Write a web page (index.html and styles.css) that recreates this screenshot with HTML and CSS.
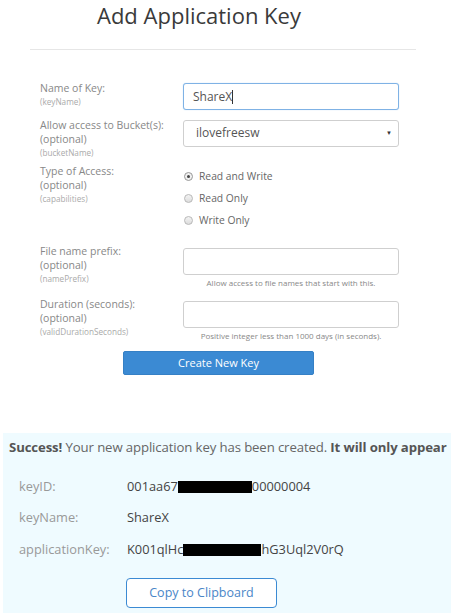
FILE: index.html
```html
<!DOCTYPE html>
<html>
<head>
<meta charset="utf-8">
<link rel="stylesheet" href="styles.css">
</head>
<body>
<div class="page">
  <h1 class="title">Add Application Key</h1>
  <div class="rule"></div>
  <form class="form">
    <div class="row r1">
      <div class="lab"><div class="main">Name of Key:</div><div class="sub">(keyName)</div></div>
      <div class="field"><div class="input focus">ShareX<span class="caret"></span></div></div>
    </div>
    <div class="row r2">
      <div class="lab"><div class="main">Allow access to Bucket(s):</div><div class="main">(optional)</div><div class="sub">(bucketName)</div></div>
      <div class="field"><div class="input select"><span>ilovefreesw</span><span class="arrow">▼</span></div></div>
    </div>
    <div class="row r3">
      <div class="lab"><div class="main">Type of Access:</div><div class="main">(optional)</div><div class="sub">(capabilities)</div></div>
      <div class="field radios">
        <div class="radio"><span class="dot on"></span>Read and Write</div>
        <div class="radio"><span class="dot"></span>Read Only</div>
        <div class="radio"><span class="dot"></span>Write Only</div>
      </div>
    </div>
    <div class="row r4">
      <div class="lab"><div class="main">File name prefix:</div><div class="main">(optional)</div><div class="sub">(namePrefix)</div></div>
      <div class="field"><div class="input"></div><div class="help">Allow access to file names that start with this.</div></div>
    </div>
    <div class="row r5">
      <div class="lab"><div class="main">Duration (seconds):</div><div class="main">(optional)</div><div class="sub">(validDurationSeconds)</div></div>
      <div class="field"><div class="input"></div><div class="help">Positive integer less than 1000 days (in seconds).</div></div>
    </div>
    <div class="btnrow"><div class="btn-primary">Create New Key</div></div>
  </form>
  <div class="success">
    <div class="msg"><b>Success!</b> Your new application key has been created. <b>It will only appear</b></div>
    <div class="kv first"><span class="k">keyID:</span><span class="v">001aa67<span class="redact r-id"></span>00000004</span></div>
    <div class="kv"><span class="k">keyName:</span><span class="v">ShareX</span></div>
    <div class="kv"><span class="k">applicationKey:</span><span class="v">K001qlHc<span class="redact r-key"></span>hG3Uql2V0rQ</span></div>
    <div class="copyrow"><div class="btn-outline">Copy to Clipboard</div></div>
  </div>
</div>
</body>
</html>
```
FILE: styles.css
```css
html, body { margin: 0; padding: 0; background: #fff; overflow: hidden; }
body { font-family: "Open Sans", "Liberation Sans", sans-serif; color: #555; width: 451px; height: 613px; }
.page { width: 451px; overflow: hidden; }
.title { margin: 0; padding: 0 0 0 97px; font-size: 22px; font-weight: 400; color: #3a3a3a; line-height: 30px; height: 31px; }
.rule { margin: 18px 35px 0 30px; height: 1px; background: #e6e6e6; }
.form { padding: 31px 0 0 40px; margin: 0; }
.row { display: grid; grid-template-columns: 143px 216px; align-items: start; }
.lab .main { font-size: 10.5px; line-height: 14px; color: #888; }
.lab .sub { font-size: 8.2px; line-height: 13px; color: #aaa; }
.input { box-sizing: border-box; height: 27px; border: 1px solid #cfcfcf; border-radius: 3px; font-size: 12px; line-height: 25px; padding: 0 9px; color: #555; background: #fff; }
.focus { border-color: #7fb2e5; box-shadow: 0 0 1px rgba(102,175,233,.6); }
.caret { display: inline-block; width: 1px; height: 14px; background: #333; vertical-align: -3px; }
.r1 .field { padding-top: 2px; }
.r1 { margin-bottom: 8px; }
.r2 .field { padding-top: 2px; }
.r2 { margin-bottom: 5px; }
.select { display: flex; justify-content: space-between; padding: 0 6px 0 12px; line-height: 24px; }
.arrow { font-size: 6px; color: #333; }
.radios { padding-top: 1px; }
.radio { display: flex; align-items: center; height: 22px; font-size: 10.3px; color: #666; }
.dot { box-sizing: border-box; width: 9px; height: 9px; border-radius: 50%; border: 1px solid #b8b8b8; background: linear-gradient(#f4f4f4, #dcdcdc); margin: 0 6px 0 1px; position: relative; }
.dot.on { background: #f0f0f0; border-color: #999; }
.dot.on::after { content: ""; position: absolute; left: 2px; top: 2px; width: 3px; height: 3px; border-radius: 50%; background: #444; }
.r3 { margin-bottom: 13px; }
.r4 .field, .r5 .field { padding-top: 4px; }
.help { text-align: center; font-size: 8px; line-height: 14px; color: #888; margin-top: 1px; }
.r4 { margin-bottom: 7px; }
.btnrow { padding: 8px 0 0 83px; }
.btn-primary { width: 191px; height: 24px; border-radius: 2px; background: #3b8ad3; border: 1px solid #3580c5; box-sizing: border-box; color: #fff; font-size: 11px; line-height: 22px; text-align: center; }
.success { margin: 58px 0 0 3px; width: 520px; background: #effbff; padding: 5px 0 8px 6px; height: 182px; box-sizing: border-box; white-space: nowrap; }
.msg { font-size: 13.2px; line-height: 18px; color: #666; letter-spacing: -0.12px; }
.msg b { color: #555; }
.kv { display: flex; padding-left: 10px; height: 31.5px; align-items: center; font-size: 12.8px; }
.kv.first { margin-top: 14px; }
.k { width: 108px; color: #999; }
.v { color: #444; }
.redact { display: inline-block; background: #000; height: 12px; vertical-align: -2px; }
.r-id { width: 74px; }
.r-key { width: 78px; }
.copyrow { padding: 13px 0 0 117px; }
.btn-outline { width: 151px; height: 30px; box-sizing: border-box; border: 1px solid #3b8ad3; border-radius: 4px; background: #fff; color: #4a86c8; font-size: 12.5px; line-height: 28px; text-align: center; }
```
